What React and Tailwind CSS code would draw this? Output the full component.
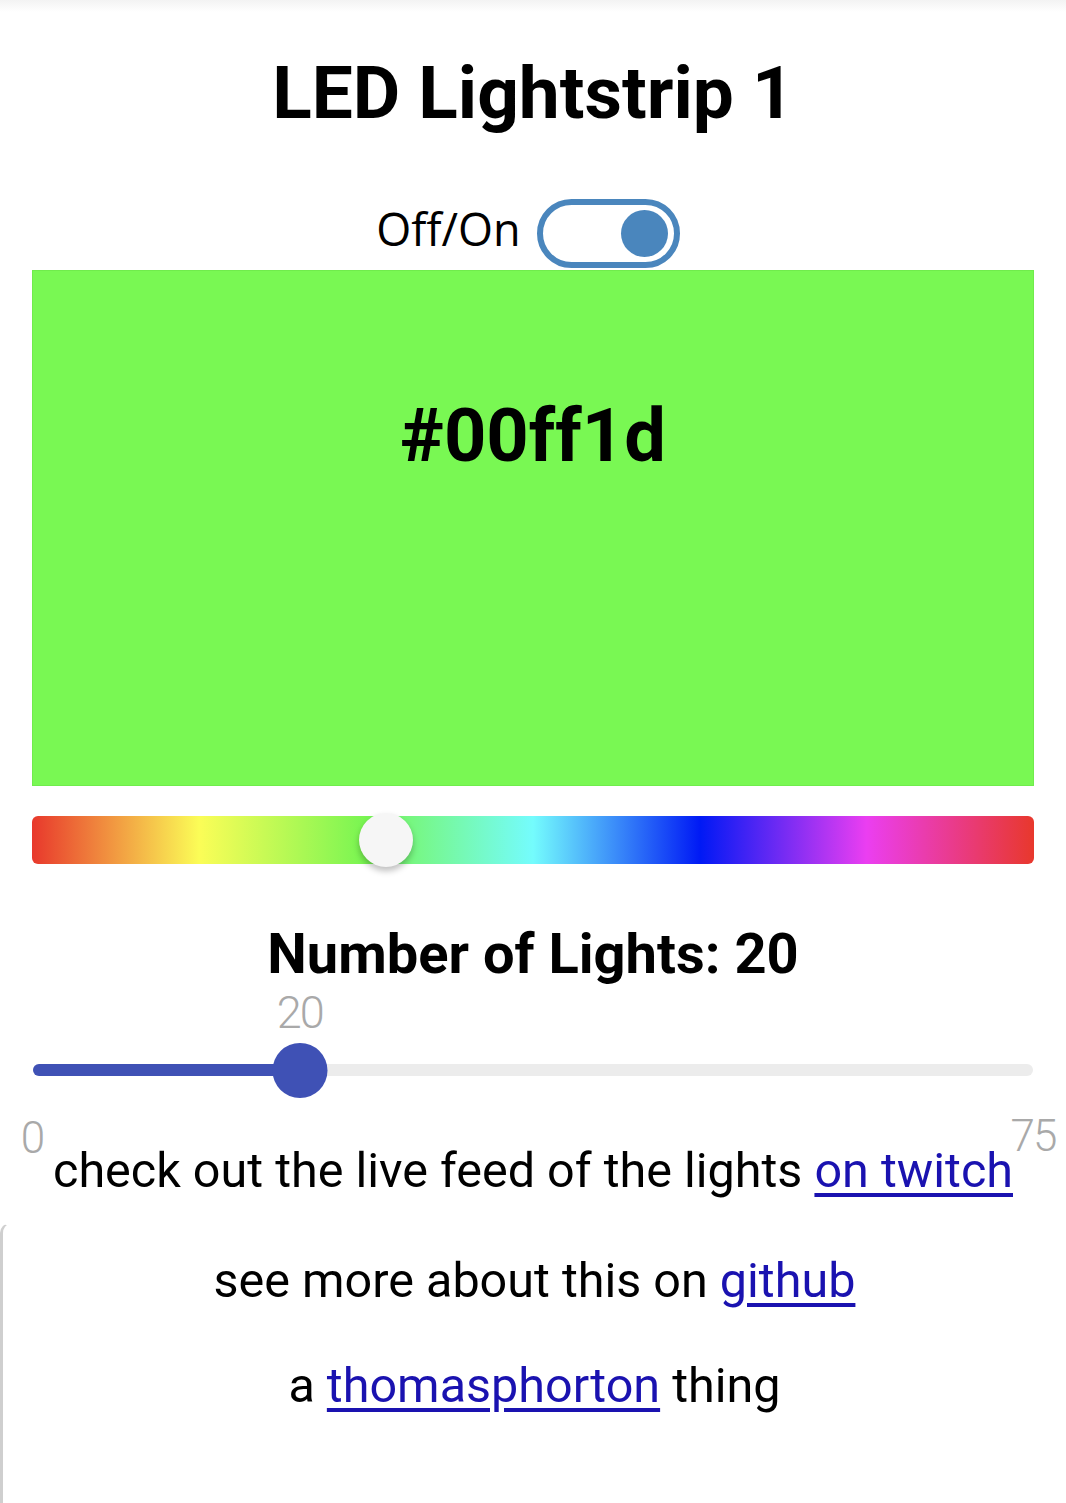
import { useState } from 'react';

const HUE_GRADIENT =
  'bg-[linear-gradient(to_right,#e8382c_0%,#fbfd57_16.7%,#78f552_33.3%,#74fcfd_50%,#0019f5_66.7%,#eb3ef1_83.3%,#e8382c_100%)]';

export default function App() {
  const [on, setOn] = useState(true);
  const [count] = useState(20);
  const max = 75;
  const pct = (count / max) * 100;

  return (
    <div className="min-h-screen flex flex-col bg-[linear-gradient(to_bottom,#f3f3f3,#ffffff_12px)] font-['Roboto',sans-serif] text-black">
      {/* TITLE */}
      <h1 className="mt-[57px] text-center text-[73px] leading-none font-bold">
        LED Lightstrip 1
      </h1>

      {/* TOGGLE */}
      <div className="mt-[69px] pr-[10px] flex items-center justify-center gap-4">
        <span className="mb-[10px] font-['Open_Sans',sans-serif] text-[45px] leading-none">
          Off/On
        </span>
        <button
          onClick={() => setOn(!on)}
          className="w-[143px] h-[69px] rounded-full border-[6px] border-[#4a86bd] bg-white flex items-center justify-end px-[6px]"
        >
          <span className="block w-[47px] h-[47px] rounded-full bg-[#4a86bd]" />
        </button>
      </div>

      {/* COLOUR PREVIEW */}
      <div className="mt-[2px] mx-[32px] h-[516px] bg-[#79f853] border border-[#70ec4c] pt-[128px] text-center">
        <span className="text-[74px] leading-none font-bold">#00ff1d</span>
      </div>

      {/* HUE SLIDER */}
      <div className={`relative mt-[30px] mx-[32px] h-[48px] rounded-[6px] ${HUE_GRADIENT}`}>
        <div className="absolute left-[35.3%] top-1/2 -translate-x-1/2 -translate-y-1/2 w-[54px] h-[54px] rounded-full bg-[#f6f6f6] shadow-[0_4px_6px_rgba(0,0,0,0.25)]" />
      </div>

      {/* NUMBER OF LIGHTS */}
      <h2 className="mt-[62px] text-center text-[56px] leading-none font-bold">
        Number of Lights: {count}
      </h2>

      <div className="relative mt-[8px] mx-[33px] h-[130px]">
        <span
          className="absolute top-0 -translate-x-1/2 text-[45px] leading-none font-light tracking-[-2px] text-[#a9a9a9]"
          style={{ left: `${pct}%` }}
        >
          {count}
        </span>
        <div className="absolute left-0 right-0 top-[74px] h-[12px] rounded-full bg-[#ececec]" />
        <div
          className="absolute left-0 top-[74px] h-[12px] rounded-full bg-[#3f51b5]"
          style={{ width: `${pct}%` }}
        />
        <div
          className="absolute top-[53px] -translate-x-1/2 w-[55px] h-[55px] rounded-full bg-[#3f51b5]"
          style={{ left: `${pct}%` }}
        />
        <span className="absolute left-0 top-[126px] -translate-x-1/2 text-[44px] leading-none font-light text-[#a9a9a9]">
          0
        </span>
        <span className="absolute right-0 top-[124px] translate-x-1/2 text-[44px] leading-none font-light tracking-[-2px] text-[#a9a9a9]">
          75
        </span>
      </div>

      {/* LINKS */}
      <p className="mt-[27px] text-center text-[48.5px] leading-none">
        check out the live feed of the lights{' '}
        <a href="#" className="text-[#1a12b0] underline underline-offset-[6px]">
          on twitch
        </a>
      </p>

      <div className="mt-[27px] flex-1 border-l-[3px] border-t border-[#cfcfcf] border-t-transparent rounded-tl-[10px] text-center text-[48.5px] leading-none">
        <p className="pt-[33px]">
          see more about this on{' '}
          <a href="#" className="text-[#1a12b0] underline underline-offset-[6px]">
            github
          </a>
        </p>
        <p className="mt-[57px]">
          a{' '}
          <a href="#" className="text-[#1a12b0] underline underline-offset-[6px]">
            thomasphorton
          </a>{' '}
          thing
        </p>
      </div>
    </div>
  );
}
